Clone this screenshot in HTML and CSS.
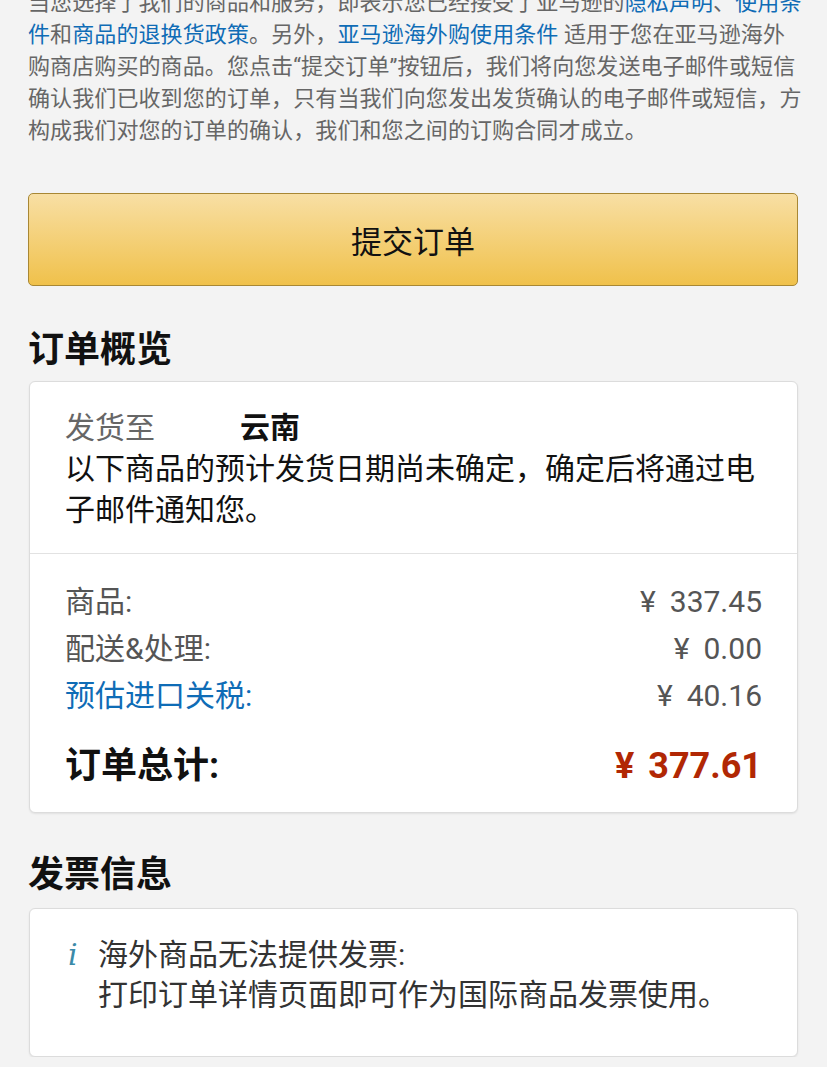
FILE: index.html
```html
<!DOCTYPE html>
<html lang="zh-CN">
<head>
<meta charset="utf-8">
<title>提交订单</title>
<link rel="stylesheet" href="styles.css">
</head>
<body>
<div class="page">
  <p class="legal">当您选择了我们的商品和服务，即表示您已经接受了亚马逊的<a class="lnk">隐私声明</a>、<a class="lnk">使用条<br>件</a>和<a class="lnk">商品的退换货政策</a>。另外，<a class="lnk">亚马逊海外购使用条件</a> 适用于您在亚马逊海外<br>购商店购买的商品。您点击“提交订单”按钮后，我们将向您发送电子邮件或短信<br>确认我们已收到您的订单，只有当我们向您发出发货确认的电子邮件或短信，方<br>构成我们对您的订单的确认，我们和您之间的订购合同才成立。</p>

  <div class="submit">提交订单</div>

  <h2 class="heading">订单概览</h2>
  <div class="card">
    <div class="ship">
      <div class="ship-to"><span class="muted">发货至</span><span class="redact"></span><b class="city">云南</b></div>
      <div class="ship-note">以下商品的预计发货日期尚未确定，确定后将通过电子邮件通知您。</div>
    </div>
    <div class="totals">
      <div class="row"><span>商品:</span><span><span class="cur">¥</span>337.45</span></div>
      <div class="row"><span>配送&amp;处理:</span><span><span class="cur">¥</span>0.00</span></div>
      <div class="row"><span class="blue">预估进口关税:</span><span><span class="cur">¥</span>40.16</span></div>
      <div class="row grand"><span>订单总计:</span><span class="red"><span class="cur">¥</span>377.61</span></div>
    </div>
  </div>

  <h2 class="heading h2b">发票信息</h2>
  <div class="card invoice">
    <span class="info-i">i</span>
    <div class="info-text">海外商品无法提供发票:<br>打印订单详情页面即可作为国际商品发票使用。</div>
  </div>
</div>
</body>
</html>
```

FILE: styles.css
```css
html, body {
  margin: 0;
  padding: 0;
  background: #f3f3f3;
  overflow: hidden;
}
body {
  font-family: Roboto, "Noto Sans CJK SC", sans-serif;
  color: #111;
}
.page {
  padding: 0 29px 0 28px;
}
.legal {
  margin: -13px -20px 0 0;
  font-size: 22px;
  line-height: 32px;
  letter-spacing: 0.1px;
  color: #666;
  white-space: nowrap;
}
.lnk {
  color: #0f6cb6;
}
.submit {
  margin-top: 46px;
  height: 91px;
  border: 1px solid #a88734;
  border-radius: 5px;
  background: linear-gradient(#f8dfa4, #f0c14b);
  display: flex;
  align-items: center;
  justify-content: center;
  font-size: 31px;
  color: #111;
}
.heading {
  margin: 44px 0 11px 0;
  font-size: 36px;
  line-height: 40px;
  font-weight: 700;
  color: #111;
}
.h2b {
  margin-top: 42px;
  margin-bottom: 13px;
}
.card {
  background: #fff;
  border: 1px solid #dcdcdc;
  border-radius: 6px;
  box-shadow: 0 1px 2px rgba(0,0,0,0.08);
  margin-left: 1px;
}
.ship {
  padding: 25px 35px 23px 35px;
  border-bottom: 1px solid #e2e2e2;
  font-size: 30px;
  line-height: 41px;
}
.ship-to {
  display: flex;
  align-items: baseline;
}
.muted {
  color: #666;
}
.redact {
  display: inline-block;
  width: 85px;
}
.city {
  font-weight: 700;
  color: #111;
}
.ship-note {
  color: #111;
}
.totals {
  padding: 24px 35px 21px 35px;
}
.row {
  display: flex;
  justify-content: space-between;
  font-size: 30px;
  line-height: 47px;
  color: #555;
}
.cur {
  margin-right: 14px;
}
.blue {
  color: #0f6cb6;
}
.row.grand {
  margin-top: 22px;
  line-height: 50px;
  font-size: 36px;
  font-weight: 700;
  color: #111;
}
.red {
  color: #b12704;
}
.invoice {
  display: flex;
  padding: 26px 35px 41px 38px;
  font-size: 30px;
  line-height: 40px;
  color: #333;
}
.info-i {
  font-family: "DejaVu Serif", "Liberation Serif", serif;
  font-style: italic;
  color: #3b8aa8;
  width: 30px;
  font-size: 30px;
}
.info-text {
  flex: 1;
}
```
